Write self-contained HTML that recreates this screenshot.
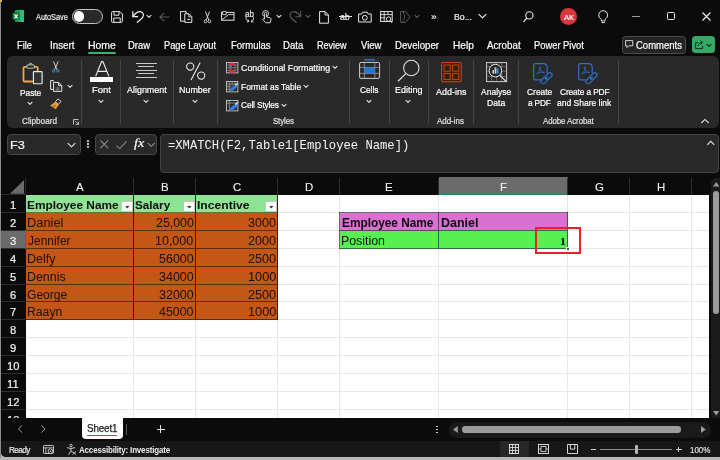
<!DOCTYPE html>
<html><head><meta charset="utf-8"><title>Excel</title>
<style>
html,body{margin:0;padding:0;}
body{width:720px;height:460px;overflow:hidden;background:#0b0b0b;font-family:"Liberation Sans",sans-serif;}
#w{position:relative;width:720px;height:460px;overflow:hidden;will-change:transform;}
.r{position:absolute;box-sizing:border-box;}
.t{position:absolute;white-space:pre;transform-origin:0 0;}
svg{overflow:visible;}
</style></head><body><div id="w">
<div class="r" style="left:0.00px;top:0.00px;width:720.00px;height:460.00px;background:#b6b6b6;"></div>
<div class="r" style="left:0.00px;top:0.00px;width:1.20px;height:458.00px;background:#8c8c8c;"></div>
<div class="r" style="left:1.20px;top:0.00px;width:718.80px;height:457.30px;background:#0b0b0b;border-bottom-left-radius:5px;"></div>
<div class="r" style="left:0.00px;top:0.00px;width:1.60px;height:1.60px;background:#d9b83a;"></div>
<svg class="r" style="left:12.00px;top:10.00px;" width="13" height="12" viewBox="0 0 13 12" fill="none"><rect x="3" y="0" width="9" height="12" rx="0.8" fill="#1d9a57"/>
<rect x="7.6" y="0" width="4.4" height="12" rx="0.6" fill="#2dbd76"/>
<rect x="0.5" y="2.8" width="7.3" height="7" rx="0.6" fill="#0f7a40"/>
<path d="M2.5 4.4L5.7 8.3 M5.7 4.4L2.5 8.3" stroke="#fff" stroke-width="1.15"/></svg>
<span class="t" style="left:35.60px;top:12px;font-size:8.40px;line-height:11px;color:#ececec;transform:scaleX(0.8778);-webkit-text-stroke:0.2px #ececec;">AutoSave</span>
<div class="r" style="left:71.70px;top:9.00px;width:31.60px;height:15.00px;background:#2a2a2a;border:1.2px solid #c4c4c4;border-radius:8px;"></div>
<div class="r" style="left:73.60px;top:11.00px;width:10.80px;height:10.80px;background:#ffffff;border-radius:5.5px;"></div>
<svg class="r" style="left:111.00px;top:11.00px;" width="12" height="12" viewBox="0 0 12 12" fill="none"><path d="M0.6 1.6a1 1 0 0 1 1-1H9l2.4 2.4v7.4a1 1 0 0 1-1 1H1.6a1 1 0 0 1-1-1z M3 0.8v3.4h5V0.8 M2.8 11.2V7h6.4v4.2" stroke="#e8e8e8" stroke-width="1"/></svg>
<svg class="r" style="left:131.50px;top:10.50px;" width="12" height="12" viewBox="0 0 12 12" fill="none"><path d="M0.8 0.3V5.7H6.1 M1.1 5.5C3 2.5 6 0.5 8.5 0.7C11 1 12 3.5 11.1 5.5C10.3 7.5 7.5 9.5 4.8 11.5" stroke="#f0f0f0" stroke-width="1.2"/></svg>
<svg class="r" style="left:147.00px;top:14.60px;" width="4" height="3" viewBox="0 0 4 3" fill="none"><path d="M0 0.3L2 2.3L4 0.3" stroke="#e0e0e0" stroke-width="1.1" stroke-linecap="round" stroke-linejoin="round"/></svg>
<svg class="r" style="left:159.00px;top:11.50px;" width="11" height="10" viewBox="0 0 11 10" fill="none"><path d="M10.5 5H1 M5 0.8L0.9 5L5 9.2" stroke="#5a5a5a" stroke-width="1.1"/></svg>
<svg class="r" style="left:180.00px;top:10.50px;" width="13" height="13" viewBox="0 0 13 13" fill="none"><path d="M6.2 2.6V0.6H0.6v9.6h4" stroke="#e8e8e8" stroke-width="1"/><path d="M4.8 2.8h4.2l2.8 2.8v5.8H4.8z" stroke="#e8e8e8" stroke-width="1" fill="#0b0b0b"/><path d="M8.8 3v2.8h2.8" stroke="#e8e8e8" stroke-width="0.9"/><path d="M7.4 8.4h2.4" stroke="#e8e8e8" stroke-width="1.2"/></svg>
<svg class="r" style="left:202.50px;top:10.50px;" width="9" height="13" viewBox="0 0 9 13" fill="none"><path d="M2.4 0.5L5.8 9 M6.6 0.5L3.2 9" stroke="#e8e8e8" stroke-width="0.9"/><circle cx="2.5" cy="10.4" r="1.4" stroke="#e8e8e8" stroke-width="0.85"/><circle cx="6.5" cy="10.4" r="1.4" stroke="#e8e8e8" stroke-width="0.85"/></svg>
<svg class="r" style="left:221.00px;top:10.50px;" width="14" height="11" viewBox="0 0 14 11" fill="none"><rect x="0.6" y="1.4" width="12.4" height="7.8" stroke="#e8e8e8" stroke-width="1"/><path d="M1.2 8.6L7.6 3.6h5" stroke="#e8e8e8" stroke-width="0.9"/><path d="M1.6 0.6h3.6v3H1.6z" stroke="#e8e8e8" stroke-width="0.8" fill="#0b0b0b"/></svg>
<span class="t" style="left:244.70px;top:9px;font-size:8.40px;line-height:11px;color:#e8e8e8;transform:scaleX(0.9669);-webkit-text-stroke:0.2px #e8e8e8;">ab</span>
<svg class="r" style="left:244.60px;top:16.20px;" width="10" height="6.4" viewBox="0 0 10 6.4" fill="none"><path d="M1.4 0.8c-1 2 0 3.8 2.4 4.6 M8 0.8c1.2 1.8 0.6 3.8-1.6 4.8 M2.8 3.4l1.2 2-2.2 0.6 M7.2 3.6l-1 2.2 2.2 0.2" stroke="#e8e8e8" stroke-width="0.85"/></svg>
<svg class="r" style="left:260.60px;top:9.60px;" width="11" height="14" viewBox="0 0 11 14" fill="none"><circle cx="4.6" cy="3.6" r="3" stroke="#e8e8e8" stroke-width="0.9"/><path d="M3.6 9V3.4a1 1 0 0 1 2 0V7l3.4 0.8c0.8 0.2 1.2 0.8 1 1.6l-0.8 3.4H4.6L2 9.6c-0.4-0.8 0.6-1.6 1.6-0.6z" stroke="#e8e8e8" stroke-width="0.9" fill="#0b0b0b"/></svg>
<svg class="r" style="left:277.00px;top:14.60px;" width="4" height="3" viewBox="0 0 4 3" fill="none"><path d="M0 0.3L2 2.3L4 0.3" stroke="#e0e0e0" stroke-width="1.1" stroke-linecap="round" stroke-linejoin="round"/></svg>
<svg class="r" style="left:290.40px;top:10.50px;" width="11" height="12" viewBox="0 0 11 12" fill="none"><path d="M10.6 0.3V5.7H5.3 M10.3 5.5C8.4 2.5 5.4 0.5 2.9 0.7C0.4 1 -0.6 3.5 0.3 5.5C1.1 7.5 3.9 9.5 6.6 11.5" stroke="#5a5a5a" stroke-width="1.15"/></svg>
<svg class="r" style="left:305.50px;top:14.60px;" width="4" height="3" viewBox="0 0 4 3" fill="none"><path d="M0 0.3L2 2.3L4 0.3" stroke="#5a5a5a" stroke-width="1.1" stroke-linecap="round" stroke-linejoin="round"/></svg>
<svg class="r" style="left:319.00px;top:10.50px;" width="10" height="13" viewBox="0 0 10 13" fill="none"><path d="M0.6 0.6h5.6l3.2 3.2v8.4H0.6z M6 0.8v3.2h3.2" stroke="#e8e8e8" stroke-width="1"/></svg>
<span class="t" style="left:340.14px;top:11px;font-size:9.00px;line-height:12px;color:#e8e8e8;transform:scaleX(0.9730);-webkit-text-stroke:0.2px #e8e8e8;">ab</span>
<div class="r" style="left:338.50px;top:16.30px;width:13.00px;height:1.00px;background:#e8e8e8;"></div>
<svg class="r" style="left:357.50px;top:10.50px;" width="14" height="12" viewBox="0 0 14 12" fill="none"><path d="M0.6 3h3l1-1.8h4.6l1 1.8h3v8H0.6z" stroke="#e8e8e8" stroke-width="1"/><circle cx="6.8" cy="6.8" r="2.4" stroke="#e8e8e8" stroke-width="1"/></svg>
<svg class="r" style="left:380.00px;top:10.60px;" width="13" height="13" viewBox="0 0 13 13" fill="none"><rect x="0.6" y="0.6" width="11.6" height="9.8" stroke="#e8e8e8" stroke-width="1"/><path d="M0.6 3.6h11.6 M0.6 6.8h5 M4.2 0.6v9.8 M8 0.6v3" stroke="#e8e8e8" stroke-width="0.9"/><circle cx="8.6" cy="8" r="2.2" stroke="#e8e8e8" stroke-width="0.9" fill="#0b0b0b"/><path d="M10.2 9.8l2 2.2" stroke="#e8e8e8" stroke-width="0.9"/></svg>
<svg class="r" style="left:400.00px;top:10.50px;" width="11" height="12" viewBox="0 0 11 12" fill="none"><path d="M0.6 0.6h5l4.4 5.2-4.4 5.6h-5z M3 0.8c2 3 2 7 0 10" stroke="#5a5a5a" stroke-width="1"/></svg>
<svg class="r" style="left:415.00px;top:14.60px;" width="4" height="3" viewBox="0 0 4 3" fill="none"><path d="M0 0.3L2 2.3L4 0.3" stroke="#5a5a5a" stroke-width="1.1" stroke-linecap="round" stroke-linejoin="round"/></svg>
<span class="t" style="left:430.58px;top:11px;font-size:9.00px;line-height:12px;color:#e8e8e8;transform:scaleX(1.1200);-webkit-text-stroke:0.2px #e8e8e8;">»</span>
<span class="t" style="left:454.30px;top:11px;font-size:8.60px;line-height:12px;color:#ececec;transform:scaleX(1.0154);-webkit-text-stroke:0.2px #ececec;">Bo...</span>
<svg class="r" style="left:478.50px;top:14.20px;" width="7" height="4.5" viewBox="0 0 7 4.5" fill="none"><path d="M0 0.3L3.5 3.8L7 0.3" stroke="#e8e8e8" stroke-width="1.2" stroke-linecap="round" stroke-linejoin="round"/></svg>
<svg class="r" style="left:522.50px;top:10.50px;" width="11" height="12" viewBox="0 0 11 12" fill="none"><circle cx="6.4" cy="4.4" r="3.6" stroke="#e8e8e8" stroke-width="1.1"/><path d="M3.8 7L0.6 10.8" stroke="#e8e8e8" stroke-width="1.2"/></svg>
<div class="r" style="left:560.00px;top:8.00px;width:17.00px;height:17.00px;background:#d9363e;border-radius:9px;"></div>
<span class="t" style="left:563.60px;top:13px;font-size:7.20px;line-height:10px;color:#fff;transform:scaleX(1.0526);-webkit-text-stroke:0.2px #fff;">AK</span>
<svg class="r" style="left:597.50px;top:10.00px;" width="11" height="14" viewBox="0 0 11 14" fill="none"><path d="M3.4 9.4C1.4 8 0.6 6.4 0.8 4.8 1 2.4 3 0.7 5.2 0.7s4.2 1.7 4.4 4.1c0.2 1.6-0.6 3.2-2.6 4.6v1.6H3.4z M3.6 12.6h3.2" stroke="#e8e8e8" stroke-width="1"/></svg>
<div class="r" style="left:632.00px;top:15.80px;width:8.00px;height:1.00px;background:#9c9c9c;"></div>
<div class="r" style="left:667.30px;top:12.30px;width:8.00px;height:8.00px;background:transparent;border:1.2px solid #e8e8e8;border-radius:1.5px;"></div>
<svg class="r" style="left:702.00px;top:12.00px;" width="9" height="9" viewBox="0 0 9 9" fill="none"><path d="M0.5 0.5l8 8 M8.5 0.5l-8 8" stroke="#f0f0f0" stroke-width="1.1"/></svg>
<span class="t" style="left:16.67px;top:39px;font-size:10.30px;line-height:14px;color:#ffffff;transform:scaleX(0.8976);-webkit-text-stroke:0.2px #ffffff;">File</span>
<span class="t" style="left:49.71px;top:39px;font-size:10.30px;line-height:14px;color:#ffffff;transform:scaleX(0.9511);-webkit-text-stroke:0.2px #ffffff;">Insert</span>
<span class="t" style="left:87.78px;top:39px;font-size:10.30px;line-height:14px;color:#ffffff;transform:scaleX(1.0133);-webkit-text-stroke:0.2px #ffffff;">Home</span>
<span class="t" style="left:128.05px;top:39px;font-size:10.30px;line-height:14px;color:#ffffff;transform:scaleX(0.9180);-webkit-text-stroke:0.2px #ffffff;">Draw</span>
<span class="t" style="left:164.07px;top:39px;font-size:10.30px;line-height:14px;color:#ffffff;transform:scaleX(0.9008);-webkit-text-stroke:0.2px #ffffff;">Page Layout</span>
<span class="t" style="left:230.85px;top:39px;font-size:10.30px;line-height:14px;color:#ffffff;transform:scaleX(0.9232);-webkit-text-stroke:0.2px #ffffff;">Formulas</span>
<span class="t" style="left:283.24px;top:39px;font-size:10.30px;line-height:14px;color:#ffffff;transform:scaleX(0.9333);-webkit-text-stroke:0.2px #ffffff;">Data</span>
<span class="t" style="left:316.89px;top:39px;font-size:10.30px;line-height:14px;color:#ffffff;transform:scaleX(0.8771);-webkit-text-stroke:0.2px #ffffff;">Review</span>
<span class="t" style="left:360.54px;top:39px;font-size:10.30px;line-height:14px;color:#ffffff;transform:scaleX(0.9220);-webkit-text-stroke:0.2px #ffffff;">View</span>
<span class="t" style="left:394.84px;top:39px;font-size:10.30px;line-height:14px;color:#ffffff;transform:scaleX(0.9391);-webkit-text-stroke:0.2px #ffffff;">Developer</span>
<span class="t" style="left:452.80px;top:39px;font-size:10.30px;line-height:14px;color:#ffffff;transform:scaleX(0.9800);-webkit-text-stroke:0.2px #ffffff;">Help</span>
<span class="t" style="left:487.00px;top:39px;font-size:10.30px;line-height:14px;color:#ffffff;transform:scaleX(0.9465);-webkit-text-stroke:0.2px #ffffff;">Acrobat</span>
<span class="t" style="left:534.26px;top:39px;font-size:10.30px;line-height:14px;color:#ffffff;transform:scaleX(0.9080);-webkit-text-stroke:0.2px #ffffff;">Power Pivot</span>
<div class="r" style="left:88.00px;top:52.00px;width:27.50px;height:1.60px;background:#36b36f;border-radius:1px;"></div>
<div class="r" style="left:621.50px;top:35.80px;width:64.50px;height:17.90px;background:#242424;border:1px solid #4c4c4c;border-radius:3.5px;"></div>
<svg class="r" style="left:625.00px;top:40.20px;" width="8.4" height="8.4" viewBox="0 0 8.4 8.4" fill="none"><path d="M0.6 0.6h7.2v5.2H3.8L2 7.6V5.8H0.6z" stroke="#e8e8e8" stroke-width="0.9"/></svg>
<span class="t" style="left:636.34px;top:39px;font-size:10.30px;line-height:14px;color:#ffffff;transform:scaleX(0.9224);-webkit-text-stroke:0.2px #ffffff;">Comments</span>
<div class="r" style="left:692.00px;top:35.80px;width:22.80px;height:17.60px;background:#36a866;border-radius:3.5px;"></div>
<svg class="r" style="left:695.00px;top:40.00px;" width="9" height="9" viewBox="0 0 9 9" fill="none"><path d="M3 2.6H0.6v6h7V6 M3.2 6C3.4 3.6 5 2.6 7 2.6 M5.4 0.6L7.6 2.6 5.4 4.6" stroke="#0e2a1a" stroke-width="0.95"/></svg>
<svg class="r" style="left:707.20px;top:43.80px;" width="4" height="3" viewBox="0 0 4 3" fill="none"><path d="M0 0.3L2 2.3L4 0.3" stroke="#0e2a1a" stroke-width="1.1" stroke-linecap="round" stroke-linejoin="round"/></svg>
<div class="r" style="left:7.00px;top:56.00px;width:711.50px;height:71.50px;background:#292929;border-radius:6px;"></div>
<div class="r" style="left:80.50px;top:59.50px;width:1.00px;height:64.50px;background:#454545;"></div>
<div class="r" style="left:120.00px;top:59.50px;width:1.00px;height:64.50px;background:#454545;"></div>
<div class="r" style="left:173.00px;top:59.50px;width:1.00px;height:64.50px;background:#454545;"></div>
<div class="r" style="left:217.00px;top:59.50px;width:1.00px;height:64.50px;background:#454545;"></div>
<div class="r" style="left:349.00px;top:59.50px;width:1.00px;height:64.50px;background:#454545;"></div>
<div class="r" style="left:389.00px;top:59.50px;width:1.00px;height:64.50px;background:#454545;"></div>
<div class="r" style="left:428.00px;top:59.50px;width:1.00px;height:64.50px;background:#454545;"></div>
<div class="r" style="left:473.00px;top:59.50px;width:1.00px;height:64.50px;background:#454545;"></div>
<div class="r" style="left:518.00px;top:59.50px;width:1.00px;height:64.50px;background:#454545;"></div>
<div class="r" style="left:618.00px;top:59.50px;width:1.00px;height:64.50px;background:#454545;"></div>
<svg class="r" style="left:21.50px;top:61.50px;" width="21" height="23" viewBox="0 0 21 23" fill="none"><path d="M5.5 4.9H2.5a1 1 0 0 0-1 1V18.5a1 1 0 0 0 1 1H10.8 M11.7 4.9H14.7a1 1 0 0 1 1 1V9" stroke="#eea83a" stroke-width="1.8"/>
<rect x="4.9" y="2.9" width="7.4" height="3.3" rx="0.7" stroke="#cfcfcf" stroke-width="0.9" fill="#292929"/>
<path d="M7 2.9a1.6 1.7 0 0 1 3.2 0" stroke="#cfcfcf" stroke-width="0.9"/>
<rect x="11.4" y="9.6" width="8.7" height="12.1" rx="0.6" stroke="#ececec" stroke-width="1.15" fill="#323232"/></svg>
<span class="t" style="left:19.65px;top:86px;font-size:9.60px;line-height:13px;color:#ffffff;transform:scaleX(0.8700);letter-spacing:-0.026px;-webkit-text-stroke:0.2px #ffffff;">Paste</span>
<svg class="r" style="left:28.00px;top:101.50px;" width="4" height="3" viewBox="0 0 4 3" fill="none"><path d="M0 0.3L2 2.3L4 0.3" stroke="#e0e0e0" stroke-width="1.1" stroke-linecap="round" stroke-linejoin="round"/></svg>
<svg class="r" style="left:51.80px;top:61.40px;" width="8" height="12.5" viewBox="0 0 8 12.5" fill="none"><path d="M1.4 0.4L5 8.6 M6.2 0.4L2.6 8.6" stroke="#e8e8e8" stroke-width="0.85"/><circle cx="1.7" cy="9.9" r="1.2" stroke="#3a9ae8" stroke-width="0.9"/><circle cx="5.9" cy="9.9" r="1.2" stroke="#3a9ae8" stroke-width="0.9"/></svg>
<svg class="r" style="left:50.00px;top:80.00px;" width="12.5" height="12" viewBox="0 0 12.5 12" fill="none"><path d="M3.4 1.6V0.6H0.6v8.8h2.4" stroke="#e8e8e8" stroke-width="1"/><path d="M3.6 2.4h5l3.2 3v6H3.6z M8.4 2.6v3h3.2" stroke="#e8e8e8" stroke-width="1"/><path d="M5.6 8h4 M5.6 9.8h4" stroke="#bdbdbd" stroke-width="0.7"/></svg>
<svg class="r" style="left:67.60px;top:85.00px;" width="4" height="3" viewBox="0 0 4 3" fill="none"><path d="M0 0.3L2 2.3L4 0.3" stroke="#e0e0e0" stroke-width="1.1" stroke-linecap="round" stroke-linejoin="round"/></svg>
<svg class="r" style="left:50.00px;top:98.40px;" width="12" height="11.5" viewBox="0 0 12 11.5" fill="none"><path d="M8 0.8l3 2.6-2.6 3-3-2.6z" stroke="#e8e8e8" stroke-width="0.9"/><path d="M5.6 4L0.6 7.6l5 3.4 3-4.4z" fill="#e8a23a" stroke="#e8a23a" stroke-width="0.6"/><path d="M2.6 8.4l2 1.4 M4 7l2.2 1.6" stroke="#292929" stroke-width="0.6"/></svg>
<span class="t" style="left:22.20px;top:115px;font-size:9.00px;line-height:12px;color:#e2e2e2;transform:scaleX(0.9067);-webkit-text-stroke:0.2px #e2e2e2;">Clipboard</span>
<svg class="r" style="left:73.00px;top:118.60px;" width="6.5" height="6" viewBox="0 0 6.5 6" fill="none"><path d="M0.5 5.5V0.5h5" stroke="#d0d0d0" stroke-width="0.9"/><path d="M2.4 2.2l3 3 M5.6 2.6v2.8H2.8" stroke="#d0d0d0" stroke-width="0.9"/></svg>
<svg class="r" style="left:94.50px;top:60.60px;" width="14.5" height="15.6" viewBox="0 0 14.5 15.6" fill="none"><path d="M0.6 15.4L6.6 0.6h1.3L13.9 15.4 M2.6 10.4h9.4" stroke="#ececec" stroke-width="1.15"/></svg>
<div class="r" style="left:89.60px;top:76.80px;width:23.40px;height:5.40px;background:#ffffff;"></div>
<span class="t" style="left:91.66px;top:83px;font-size:9.60px;line-height:13px;color:#ffffff;transform:scaleX(0.9871);-webkit-text-stroke:0.2px #ffffff;">Font</span>
<svg class="r" style="left:98.80px;top:99.60px;" width="4" height="3" viewBox="0 0 4 3" fill="none"><path d="M0 0.3L2 2.3L4 0.3" stroke="#e0e0e0" stroke-width="1.1" stroke-linecap="round" stroke-linejoin="round"/></svg>
<div class="r" style="left:136.00px;top:62.55px;width:21.00px;height:0.90px;background:#c8c8c8;"></div>
<div class="r" style="left:138.20px;top:66.35px;width:16.00px;height:0.90px;background:#c8c8c8;"></div>
<div class="r" style="left:136.00px;top:69.85px;width:21.00px;height:0.90px;background:#c8c8c8;"></div>
<div class="r" style="left:138.20px;top:73.35px;width:16.00px;height:0.90px;background:#c8c8c8;"></div>
<div class="r" style="left:136.00px;top:76.85px;width:21.00px;height:0.90px;background:#c8c8c8;"></div>
<span class="t" style="left:127.00px;top:83px;font-size:9.60px;line-height:13px;color:#ffffff;transform:scaleX(0.9310);-webkit-text-stroke:0.2px #ffffff;">Alignment</span>
<svg class="r" style="left:144.30px;top:99.60px;" width="4" height="3" viewBox="0 0 4 3" fill="none"><path d="M0 0.3L2 2.3L4 0.3" stroke="#e0e0e0" stroke-width="1.1" stroke-linecap="round" stroke-linejoin="round"/></svg>
<svg class="r" style="left:185.50px;top:61.50px;" width="19.5" height="18.5" viewBox="0 0 19.5 18.5" fill="none"><circle cx="4.2" cy="4.6" r="3.6" stroke="#ececec" stroke-width="1.1"/><circle cx="15.2" cy="13.6" r="3.6" stroke="#ececec" stroke-width="1.1"/><path d="M14.2 0.6L5 18" stroke="#ececec" stroke-width="1.1"/></svg>
<span class="t" style="left:178.90px;top:83px;font-size:9.60px;line-height:13px;color:#ffffff;transform:scaleX(0.9306);-webkit-text-stroke:0.2px #ffffff;">Number</span>
<svg class="r" style="left:192.80px;top:99.60px;" width="4" height="3" viewBox="0 0 4 3" fill="none"><path d="M0 0.3L2 2.3L4 0.3" stroke="#e0e0e0" stroke-width="1.1" stroke-linecap="round" stroke-linejoin="round"/></svg>
<svg class="r" style="left:226.00px;top:61.50px;" width="12.5" height="11.5" viewBox="0 0 12.5 11.5" fill="none"><rect x="0.5" y="0.5" width="11.4" height="10.4" stroke="#d8d8d8" stroke-width="0.8"/><path d="M0.5 3.1h11.4 M0.5 5.7h11.4 M0.5 8.3h11.4 M3.3 0.5v10.4 M9 0.5v10.4" stroke="#9a9a9a" stroke-width="0.6"/><rect x="3.4" y="0.9" width="5.5" height="2.2" fill="#e8262c"/><rect x="3.4" y="3.2" width="2.4" height="2.6" fill="#3a7bd5"/><rect x="3.4" y="8.3" width="5.5" height="2.3" fill="#e8262c"/><rect x="3.4" y="5.8" width="5.5" height="2.5" fill="#e8262c" opacity="0.0"/><rect x="3.4" y="5.9" width="2.4" height="2.4" fill="#e8262c"/></svg>
<span class="t" style="left:240.54px;top:61px;font-size:9.60px;line-height:13px;color:#ffffff;transform:scaleX(0.9232);-webkit-text-stroke:0.2px #ffffff;">Conditional Formatting</span>
<svg class="r" style="left:332.80px;top:66.30px;" width="4" height="3" viewBox="0 0 4 3" fill="none"><path d="M0 0.3L2 2.3L4 0.3" stroke="#e0e0e0" stroke-width="1.1" stroke-linecap="round" stroke-linejoin="round"/></svg>
<svg class="r" style="left:226.00px;top:80.50px;" width="12.5" height="11.5" viewBox="0 0 12.5 11.5" fill="none"><rect x="0.5" y="0.5" width="11.4" height="10.4" stroke="#d8d8d8" stroke-width="0.8"/><path d="M0.5 3.1h11.4 M0.5 5.7h5 M0.5 8.3h4 M3.3 0.5v10.4 M6.2 0.5v4 M9 0.5v3" stroke="#bdbdbd" stroke-width="0.6"/><path d="M3.6 10.6l1-3.2 5.6-4.6 2 2.2-5.4 4.8z" fill="#2f7fe0"/><path d="M8.6 3.6l3 -2.2 0.8 1-2.4 2.6z" fill="#cfcfcf"/></svg>
<span class="t" style="left:241.04px;top:80px;font-size:9.60px;line-height:13px;color:#ffffff;transform:scaleX(0.8761);-webkit-text-stroke:0.2px #ffffff;">Format as Table</span>
<svg class="r" style="left:303.70px;top:84.90px;" width="4" height="3" viewBox="0 0 4 3" fill="none"><path d="M0 0.3L2 2.3L4 0.3" stroke="#e0e0e0" stroke-width="1.1" stroke-linecap="round" stroke-linejoin="round"/></svg>
<svg class="r" style="left:226.00px;top:99.50px;" width="12.5" height="11.5" viewBox="0 0 12.5 11.5" fill="none"><rect x="0.5" y="0.5" width="11.4" height="10.4" stroke="#d8d8d8" stroke-width="0.8"/><path d="M0.5 3.1h11.4 M3.3 0.5v10.4" stroke="#bdbdbd" stroke-width="0.6"/><path d="M3.6 10.6l1-3.4 5.4-3.6h1.6v3l-5.2 4z" fill="#2f7fe0"/><path d="M8.8 3.8l3-2.4 0.8 1-2.4 2.8z" fill="#cfcfcf"/></svg>
<span class="t" style="left:240.56px;top:98px;font-size:9.60px;line-height:13px;color:#ffffff;transform:scaleX(0.8700);letter-spacing:-0.164px;-webkit-text-stroke:0.2px #ffffff;">Cell Styles</span>
<svg class="r" style="left:281.50px;top:104.00px;" width="4" height="3" viewBox="0 0 4 3" fill="none"><path d="M0 0.3L2 2.3L4 0.3" stroke="#e0e0e0" stroke-width="1.1" stroke-linecap="round" stroke-linejoin="round"/></svg>
<span class="t" style="left:272.67px;top:115px;font-size:9.00px;line-height:12px;color:#e2e2e2;transform:scaleX(0.8700);letter-spacing:-0.119px;-webkit-text-stroke:0.2px #e2e2e2;">Styles</span>
<svg class="r" style="left:359.00px;top:59.00px;" width="21.5" height="20" viewBox="0 0 21.5 20" fill="none"><path d="M5 0.8h11" stroke="#2f7fe0" stroke-width="1.3"/><rect x="0.6" y="3.4" width="20" height="16" rx="1.4" stroke="#cfcfcf" stroke-width="1"/><path d="M0.6 8.4h20 M0.6 14.4h20 M5.4 3.4v16 M15.8 3.4v16" stroke="#9a9a9a" stroke-width="0.8"/><rect x="5.6" y="8.7" width="10" height="5.4" fill="#1e78d7"/></svg>
<span class="t" style="left:360.06px;top:83px;font-size:9.60px;line-height:13px;color:#ffffff;transform:scaleX(0.8700);letter-spacing:-0.054px;-webkit-text-stroke:0.2px #ffffff;">Cells</span>
<svg class="r" style="left:367.00px;top:99.60px;" width="4" height="3" viewBox="0 0 4 3" fill="none"><path d="M0 0.3L2 2.3L4 0.3" stroke="#e0e0e0" stroke-width="1.1" stroke-linecap="round" stroke-linejoin="round"/></svg>
<svg class="r" style="left:397.00px;top:59.00px;" width="23" height="23" viewBox="0 0 23 23" fill="none"><circle cx="14.3" cy="9" r="7.7" stroke="#e4e4e4" stroke-width="1.05"/><path d="M8.8 14.6L1 22.2" stroke="#e4e4e4" stroke-width="1.2"/></svg>
<span class="t" style="left:394.60px;top:83px;font-size:9.60px;line-height:13px;color:#ffffff;transform:scaleX(0.9372);-webkit-text-stroke:0.2px #ffffff;">Editing</span>
<svg class="r" style="left:406.20px;top:99.60px;" width="4" height="3" viewBox="0 0 4 3" fill="none"><path d="M0 0.3L2 2.3L4 0.3" stroke="#e0e0e0" stroke-width="1.1" stroke-linecap="round" stroke-linejoin="round"/></svg>
<svg class="r" style="left:441.00px;top:61.80px;" width="21" height="20.4" viewBox="0 0 21 20.4" fill="none"><rect x="0.6" y="0.6" width="19.6" height="19.2" rx="0.6" stroke="#d04a18" stroke-width="1" fill="#3d1c11"/><rect x="3" y="3" width="6.2" height="6.2" stroke="#d04a18" stroke-width="0.9" fill="#2b211e"/><rect x="11.6" y="3" width="6.2" height="6.2" stroke="#d04a18" stroke-width="0.9" fill="#2b211e"/><rect x="3" y="11.4" width="6.2" height="6.2" stroke="#d04a18" stroke-width="0.9" fill="#2b211e"/><rect x="11.6" y="11.4" width="6.2" height="6.2" stroke="#d04a18" stroke-width="0.9" fill="#2b211e"/></svg>
<span class="t" style="left:436.00px;top:85px;font-size:9.60px;line-height:13px;color:#ffffff;transform:scaleX(0.9346);-webkit-text-stroke:0.2px #ffffff;">Add-ins</span>
<span class="t" style="left:437.40px;top:115px;font-size:9.00px;line-height:12px;color:#e2e2e2;transform:scaleX(0.8812);-webkit-text-stroke:0.2px #e2e2e2;">Add-ins</span>
<svg class="r" style="left:485.50px;top:62.00px;" width="21.5" height="20.5" viewBox="0 0 21.5 20.5" fill="none"><rect x="0.6" y="0.6" width="20" height="19" stroke="#cfcfcf" stroke-width="1"/><path d="M0.6 4.6h20 M0.6 9.4h20 M0.6 14.4h20 M5.6 0.6v19 M10.6 0.6v19 M15.6 0.6v19" stroke="#8c8c8c" stroke-width="0.6"/><circle cx="9.4" cy="8.6" r="6.3" fill="#292929" stroke="#e4e4e4" stroke-width="1"/><path d="M14 13.4l6 6" stroke="#e4e4e4" stroke-width="1.3"/><rect x="6.4" y="8" width="1.6" height="3.6" fill="#d0d0d0"/><rect x="8.6" y="5.4" width="1.8" height="6.2" fill="#d0d0d0"/><rect x="10.8" y="6.4" width="1.8" height="5.2" fill="#2f8fe8"/></svg>
<span class="t" style="left:481.00px;top:85px;font-size:9.60px;line-height:13px;color:#ffffff;transform:scaleX(0.8872);-webkit-text-stroke:0.2px #ffffff;">Analyse</span>
<span class="t" style="left:486.82px;top:96px;font-size:9.60px;line-height:13px;color:#ffffff;transform:scaleX(0.9019);-webkit-text-stroke:0.2px #ffffff;">Data</span>
<svg class="r" style="left:532.60px;top:63.00px;" width="19" height="21" viewBox="0 0 19 21" fill="none"><path d="M2 0.7h8.6a3.6 3.6 0 0 1 3.6 3.6V10 M8 16.8H2a1.3 1.3 0 0 1-1.3-1.3V2A1.3 1.3 0 0 1 2 0.7" stroke="#2f6fd0" stroke-width="1.2"/>
<path d="M3.8 10.8c2-1.4 3.4-4.2 3.6-6.4 0.1-1-1-1-1 0 0 2 2.2 4.6 4.6 5.4 0.8 0.2 0.8-0.8 0-0.8-2.4 0-5.2 0.8-7.2 1.8z" stroke="#2f6fd0" stroke-width="0.8"/>
<rect x="7.5" y="15.2" width="7.6" height="4.4" rx="2.2" transform="rotate(-45 11.3 17.4)" stroke="#2f6fd0" stroke-width="1.2" fill="#292929"/>
<rect x="11.9" y="10.8" width="7.6" height="4.4" rx="2.2" transform="rotate(-45 15.7 13)" stroke="#2f6fd0" stroke-width="1.2" fill="#292929"/>
<path d="M12.2 16.5l2.6-2.6" stroke="#2f6fd0" stroke-width="1.2"/></svg>
<svg class="r" style="left:577.80px;top:63.00px;" width="19" height="21" viewBox="0 0 19 21" fill="none"><path d="M2 0.7h8.6a3.6 3.6 0 0 1 3.6 3.6V10 M8 16.8H2a1.3 1.3 0 0 1-1.3-1.3V2A1.3 1.3 0 0 1 2 0.7" stroke="#2f6fd0" stroke-width="1.2"/>
<path d="M3.8 10.8c2-1.4 3.4-4.2 3.6-6.4 0.1-1-1-1-1 0 0 2 2.2 4.6 4.6 5.4 0.8 0.2 0.8-0.8 0-0.8-2.4 0-5.2 0.8-7.2 1.8z" stroke="#2f6fd0" stroke-width="0.8"/>
<rect x="7.5" y="15.2" width="7.6" height="4.4" rx="2.2" transform="rotate(-45 11.3 17.4)" stroke="#2f6fd0" stroke-width="1.2" fill="#292929"/>
<rect x="11.9" y="10.8" width="7.6" height="4.4" rx="2.2" transform="rotate(-45 15.7 13)" stroke="#2f6fd0" stroke-width="1.2" fill="#292929"/>
<path d="M12.2 16.5l2.6-2.6" stroke="#2f6fd0" stroke-width="1.2"/></svg>
<span class="t" style="left:526.96px;top:85px;font-size:9.60px;line-height:13px;color:#ffffff;transform:scaleX(0.8786);-webkit-text-stroke:0.2px #ffffff;">Create</span>
<span class="t" style="left:527.97px;top:96px;font-size:9.60px;line-height:13px;color:#ffffff;transform:scaleX(0.8700);letter-spacing:-0.246px;-webkit-text-stroke:0.2px #ffffff;">a PDF</span>
<span class="t" style="left:559.57px;top:85px;font-size:9.60px;line-height:13px;color:#ffffff;transform:scaleX(0.8700);letter-spacing:-0.147px;-webkit-text-stroke:0.2px #ffffff;">Create a PDF</span>
<span class="t" style="left:556.97px;top:96px;font-size:9.60px;line-height:13px;color:#ffffff;transform:scaleX(0.8851);-webkit-text-stroke:0.2px #ffffff;">and Share link</span>
<span class="t" style="left:543.00px;top:115px;font-size:9.00px;line-height:12px;color:#e2e2e2;transform:scaleX(0.8700);letter-spacing:-0.060px;-webkit-text-stroke:0.2px #e2e2e2;">Adobe Acrobat</span>
<svg class="r" style="left:701.40px;top:118.80px;" width="8" height="4.2" viewBox="0 0 8 4.2" fill="none"><path d="M0.3 4L4 0.4L7.7 4" stroke="#e0e0e0" stroke-width="1.1"/></svg>
<div class="r" style="left:7.00px;top:134.00px;width:73.50px;height:20.50px;background:#292929;border:1px solid #464646;border-radius:4px;"></div>
<span class="t" style="left:9.77px;top:137px;font-size:11.60px;line-height:16px;color:#f4f4f4;transform:scaleX(1.0995);-webkit-text-stroke:0.2px #f4f4f4;">F3</span>
<svg class="r" style="left:68.00px;top:143.00px;" width="7" height="4.5" viewBox="0 0 7 4.5" fill="none"><path d="M0 0.3L3.5 3.8L7 0.3" stroke="#e0e0e0" stroke-width="1.1" stroke-linecap="round" stroke-linejoin="round"/></svg>
<div class="r" style="left:86.90px;top:140.40px;width:1.80px;height:1.80px;background:#f0f0f0;border-radius:0.9px;"></div>
<div class="r" style="left:86.90px;top:143.30px;width:1.80px;height:1.80px;background:#f0f0f0;border-radius:0.9px;"></div>
<div class="r" style="left:86.90px;top:146.30px;width:1.80px;height:1.80px;background:#f0f0f0;border-radius:0.9px;"></div>
<div class="r" style="left:95.00px;top:134.00px;width:62.00px;height:20.50px;background:#292929;border:1px solid #464646;border-radius:4px;"></div>
<svg class="r" style="left:100.00px;top:140.00px;" width="8.5" height="8.5" viewBox="0 0 8.5 8.5" fill="none"><path d="M0.4 0.4l7.7 7.7 M8.1 0.4L0.4 8.1" stroke="#8a8a8a" stroke-width="1.1"/></svg>
<svg class="r" style="left:116.00px;top:140.50px;" width="11" height="8" viewBox="0 0 11 8" fill="none"><path d="M0.4 4.6L3.6 7.6L10.6 0.4" stroke="#8a8a8a" stroke-width="1.1"/></svg>
<span class="t" style="left:134.27px;top:134px;font-size:13.50px;line-height:18px;color:#f8f8f8;transform:scaleX(1.0562);font-style:italic;font-family:'Liberation Serif',serif;-webkit-text-stroke:0.2px #f8f8f8;">fx</span>
<svg class="r" style="left:148.40px;top:143.00px;" width="6.4" height="4.2" viewBox="0 0 6.4 4.2" fill="none"><path d="M0 0.3L3.2 3.5L6.4 0.3" stroke="#bdbdbd" stroke-width="1" stroke-linecap="round" stroke-linejoin="round"/></svg>
<div class="r" style="left:160.00px;top:134.00px;width:558.50px;height:38.50px;background:#292929;border:1px solid #464646;border-radius:4px;"></div>
<span class="t" style="left:167.93px;top:138px;font-size:12.60px;line-height:17px;color:#f4f4f4;transform:scaleX(0.9674);font-family:'Liberation Mono',monospace;">=XMATCH(F2,Table1[Employee Name])</span>
<svg class="r" style="left:706.60px;top:141.00px;" width="7.6" height="4.2" viewBox="0 0 7.6 4.2" fill="none"><path d="M0.3 4L3.8 0.4L7.3 4" stroke="#e0e0e0" stroke-width="1.1"/></svg>
<div class="r" style="left:1.20px;top:177.00px;width:707.40px;height:18.00px;background:#0b0b0b;"></div>
<div class="r" style="left:26.00px;top:195.00px;width:682.60px;height:223.00px;background:#ffffff;"></div>
<div class="r" style="left:133.00px;top:195.00px;width:1.00px;height:223.00px;background:#e8e8e8;"></div>
<div class="r" style="left:195.00px;top:195.00px;width:1.00px;height:223.00px;background:#e8e8e8;"></div>
<div class="r" style="left:277.00px;top:195.00px;width:1.00px;height:223.00px;background:#e8e8e8;"></div>
<div class="r" style="left:339.00px;top:195.00px;width:1.00px;height:223.00px;background:#e8e8e8;"></div>
<div class="r" style="left:438.00px;top:195.00px;width:1.00px;height:223.00px;background:#e8e8e8;"></div>
<div class="r" style="left:567.00px;top:195.00px;width:1.00px;height:223.00px;background:#e8e8e8;"></div>
<div class="r" style="left:629.00px;top:195.00px;width:1.00px;height:223.00px;background:#e8e8e8;"></div>
<div class="r" style="left:691.00px;top:195.00px;width:1.00px;height:223.00px;background:#e8e8e8;"></div>
<div class="r" style="left:26.00px;top:212.00px;width:682.60px;height:1.00px;background:#e8e8e8;"></div>
<div class="r" style="left:26.00px;top:230.00px;width:682.60px;height:1.00px;background:#e8e8e8;"></div>
<div class="r" style="left:26.00px;top:248.00px;width:682.60px;height:1.00px;background:#e8e8e8;"></div>
<div class="r" style="left:26.00px;top:266.00px;width:682.60px;height:1.00px;background:#e8e8e8;"></div>
<div class="r" style="left:26.00px;top:284.00px;width:682.60px;height:1.00px;background:#e8e8e8;"></div>
<div class="r" style="left:26.00px;top:301.00px;width:682.60px;height:1.00px;background:#e8e8e8;"></div>
<div class="r" style="left:26.00px;top:319.00px;width:682.60px;height:1.00px;background:#e8e8e8;"></div>
<div class="r" style="left:26.00px;top:337.00px;width:682.60px;height:1.00px;background:#e8e8e8;"></div>
<div class="r" style="left:26.00px;top:355.00px;width:682.60px;height:1.00px;background:#e8e8e8;"></div>
<div class="r" style="left:26.00px;top:373.00px;width:682.60px;height:1.00px;background:#e8e8e8;"></div>
<div class="r" style="left:26.00px;top:391.00px;width:682.60px;height:1.00px;background:#e8e8e8;"></div>
<div class="r" style="left:26.00px;top:409.00px;width:682.60px;height:1.00px;background:#e8e8e8;"></div>
<div class="r" style="left:133.00px;top:178.00px;width:1.00px;height:17.00px;background:#2d2d2d;"></div>
<span class="t" style="left:76.18px;top:179px;font-size:11.80px;line-height:16px;color:#f4f4f4;transform:scaleX(0.9700);-webkit-text-stroke:0.2px #f4f4f4;-webkit-text-stroke:0.08px #f4f4f4;">A</span>
<div class="r" style="left:195.00px;top:178.00px;width:1.00px;height:17.00px;background:#2d2d2d;"></div>
<span class="t" style="left:161.03px;top:179px;font-size:11.80px;line-height:16px;color:#f4f4f4;transform:scaleX(0.9700);-webkit-text-stroke:0.2px #f4f4f4;-webkit-text-stroke:0.08px #f4f4f4;">B</span>
<div class="r" style="left:277.00px;top:178.00px;width:1.00px;height:17.00px;background:#2d2d2d;"></div>
<span class="t" style="left:232.82px;top:179px;font-size:11.80px;line-height:16px;color:#f4f4f4;transform:scaleX(0.9700);-webkit-text-stroke:0.2px #f4f4f4;-webkit-text-stroke:0.08px #f4f4f4;">C</span>
<div class="r" style="left:339.00px;top:178.00px;width:1.00px;height:17.00px;background:#2d2d2d;"></div>
<span class="t" style="left:304.67px;top:179px;font-size:11.80px;line-height:16px;color:#f4f4f4;transform:scaleX(0.9700);-webkit-text-stroke:0.2px #f4f4f4;-webkit-text-stroke:0.08px #f4f4f4;">D</span>
<div class="r" style="left:438.00px;top:178.00px;width:1.00px;height:17.00px;background:#2d2d2d;"></div>
<span class="t" style="left:385.47px;top:179px;font-size:11.80px;line-height:16px;color:#f4f4f4;transform:scaleX(0.9700);-webkit-text-stroke:0.2px #f4f4f4;-webkit-text-stroke:0.08px #f4f4f4;">E</span>
<div class="r" style="left:439.00px;top:177.00px;width:129.00px;height:16.80px;background:#6b6b6b;"></div>
<div class="r" style="left:439.00px;top:193.70px;width:129.00px;height:1.30px;background:#2a7f4e;"></div>
<div class="r" style="left:567.00px;top:178.00px;width:1.00px;height:17.00px;background:#2d2d2d;"></div>
<span class="t" style="left:499.77px;top:179px;font-size:11.80px;line-height:16px;color:#f4f4f4;transform:scaleX(0.9700);-webkit-text-stroke:0.2px #f4f4f4;-webkit-text-stroke:0.08px #f4f4f4;">F</span>
<div class="r" style="left:629.00px;top:178.00px;width:1.00px;height:17.00px;background:#2d2d2d;"></div>
<span class="t" style="left:594.70px;top:179px;font-size:11.80px;line-height:16px;color:#f4f4f4;transform:scaleX(0.9700);-webkit-text-stroke:0.2px #f4f4f4;-webkit-text-stroke:0.08px #f4f4f4;">G</span>
<div class="r" style="left:691.00px;top:178.00px;width:1.00px;height:17.00px;background:#2d2d2d;"></div>
<span class="t" style="left:656.88px;top:179px;font-size:11.80px;line-height:16px;color:#f4f4f4;transform:scaleX(0.9700);-webkit-text-stroke:0.2px #f4f4f4;-webkit-text-stroke:0.08px #f4f4f4;">H</span>
<div class="r" style="left:25.00px;top:178.00px;width:1.00px;height:17.00px;background:#2d2d2d;"></div>
<div class="r" style="left:1.20px;top:194.00px;width:24.80px;height:1.00px;background:#2d2d2d;"></div>
<svg class="r" style="left:10.00px;top:179.60px;" width="14" height="13.8" viewBox="0 0 14 13.8" fill="none"><path d="M14 0V13.8H0z" fill="#6b6b6b"/></svg>
<div class="r" style="left:1.20px;top:212.00px;width:23.80px;height:1.00px;background:#2d2d2d;"></div>
<span class="t" style="left:10.13px;top:197px;font-size:11.80px;line-height:16px;color:#f4f4f4;transform:scaleX(0.9500);-webkit-text-stroke:0.2px #f4f4f4;">1</span>
<div class="r" style="left:1.20px;top:230.00px;width:23.80px;height:1.00px;background:#2d2d2d;"></div>
<span class="t" style="left:10.28px;top:215px;font-size:11.80px;line-height:16px;color:#f4f4f4;transform:scaleX(0.9500);-webkit-text-stroke:0.2px #f4f4f4;">2</span>
<div class="r" style="left:1.20px;top:230.60px;width:23.80px;height:18.00px;background:#6b6b6b;"></div>
<div class="r" style="left:24.90px;top:230.40px;width:1.00px;height:18.60px;background:#357a52;"></div>
<div class="r" style="left:1.20px;top:248.00px;width:23.80px;height:1.00px;background:#2d2d2d;"></div>
<span class="t" style="left:10.31px;top:233px;font-size:11.80px;line-height:16px;color:#f4f4f4;transform:scaleX(0.9500);-webkit-text-stroke:0.2px #f4f4f4;">3</span>
<div class="r" style="left:1.20px;top:266.00px;width:23.80px;height:1.00px;background:#2d2d2d;"></div>
<span class="t" style="left:10.31px;top:251px;font-size:11.80px;line-height:16px;color:#f4f4f4;transform:scaleX(0.9500);-webkit-text-stroke:0.2px #f4f4f4;">4</span>
<div class="r" style="left:1.20px;top:284.00px;width:23.80px;height:1.00px;background:#2d2d2d;"></div>
<span class="t" style="left:10.31px;top:269px;font-size:11.80px;line-height:16px;color:#f4f4f4;transform:scaleX(0.9500);-webkit-text-stroke:0.2px #f4f4f4;">5</span>
<div class="r" style="left:1.20px;top:301.00px;width:23.80px;height:1.00px;background:#2d2d2d;"></div>
<span class="t" style="left:10.25px;top:287px;font-size:11.80px;line-height:16px;color:#f4f4f4;transform:scaleX(0.9500);-webkit-text-stroke:0.2px #f4f4f4;">6</span>
<div class="r" style="left:1.20px;top:319.00px;width:23.80px;height:1.00px;background:#2d2d2d;"></div>
<span class="t" style="left:10.28px;top:304px;font-size:11.80px;line-height:16px;color:#f4f4f4;transform:scaleX(0.9500);-webkit-text-stroke:0.2px #f4f4f4;">7</span>
<div class="r" style="left:1.20px;top:337.00px;width:23.80px;height:1.00px;background:#2d2d2d;"></div>
<span class="t" style="left:10.28px;top:322px;font-size:11.80px;line-height:16px;color:#f4f4f4;transform:scaleX(0.9500);-webkit-text-stroke:0.2px #f4f4f4;">8</span>
<div class="r" style="left:1.20px;top:355.00px;width:23.80px;height:1.00px;background:#2d2d2d;"></div>
<span class="t" style="left:10.28px;top:340px;font-size:11.80px;line-height:16px;color:#f4f4f4;transform:scaleX(0.9500);-webkit-text-stroke:0.2px #f4f4f4;">9</span>
<div class="r" style="left:1.20px;top:373.00px;width:23.80px;height:1.00px;background:#2d2d2d;"></div>
<span class="t" style="left:6.96px;top:358px;font-size:11.80px;line-height:16px;color:#f4f4f4;transform:scaleX(0.9500);-webkit-text-stroke:0.2px #f4f4f4;">10</span>
<div class="r" style="left:1.20px;top:391.00px;width:23.80px;height:1.00px;background:#2d2d2d;"></div>
<span class="t" style="left:7.43px;top:376px;font-size:11.80px;line-height:16px;color:#f4f4f4;transform:scaleX(0.9500);-webkit-text-stroke:0.2px #f4f4f4;">11</span>
<div class="r" style="left:1.20px;top:409.00px;width:23.80px;height:1.00px;background:#2d2d2d;"></div>
<span class="t" style="left:7.02px;top:394px;font-size:11.80px;line-height:16px;color:#f4f4f4;transform:scaleX(0.9500);-webkit-text-stroke:0.2px #f4f4f4;">12</span>
<span class="t" style="left:6.99px;top:412px;font-size:11.80px;line-height:16px;color:#f4f4f4;transform:scaleX(0.9500);-webkit-text-stroke:0.2px #f4f4f4;clip-path:inset(0 0 8.5px 0);">13</span>
<div class="r" style="left:26.00px;top:195.00px;width:252.00px;height:18.00px;background:#8ce494;"></div>
<div class="r" style="left:26.00px;top:213.00px;width:252.00px;height:107.00px;background:#c45616;"></div>
<div class="r" style="left:26.00px;top:230.00px;width:252.00px;height:1.00px;background:#5c2c0c;"></div>
<div class="r" style="left:26.00px;top:248.00px;width:252.00px;height:1.00px;background:#5c2c0c;"></div>
<div class="r" style="left:26.00px;top:266.00px;width:252.00px;height:1.00px;background:#5c2c0c;"></div>
<div class="r" style="left:26.00px;top:284.00px;width:252.00px;height:1.00px;background:#5c2c0c;"></div>
<div class="r" style="left:26.00px;top:301.00px;width:252.00px;height:1.00px;background:#5c2c0c;"></div>
<div class="r" style="left:26.00px;top:319.00px;width:252.00px;height:1.00px;background:#5c2c0c;"></div>
<div class="r" style="left:26.00px;top:212.00px;width:252.00px;height:1.00px;background:#5d7a3c;"></div>
<div class="r" style="left:133.00px;top:195.00px;width:1.00px;height:125.00px;background:#3a1d08;"></div>
<div class="r" style="left:195.00px;top:195.00px;width:1.00px;height:125.00px;background:#3a1d08;"></div>
<div class="r" style="left:277.00px;top:195.00px;width:1.00px;height:125.00px;background:#3a1d08;"></div>
<span class="t" style="left:26.85px;top:197px;font-size:11.80px;line-height:16px;color:#0c0c0c;transform:scaleX(1.0053);font-weight:700;">Employee Name</span>
<div class="r" style="left:121.00px;top:200.80px;width:11.80px;height:11.20px;background:#ffffff;border:1px solid #c4c4c4;"></div>
<svg class="r" style="left:124.60px;top:205.60px;" width="4.6" height="2.6" viewBox="0 0 4.6 2.6" fill="none"><path d="M0 0h4.6L2.3 2.6z" fill="#3c3c3c"/></svg>
<span class="t" style="left:135.49px;top:197px;font-size:11.80px;line-height:16px;color:#0c0c0c;transform:scaleX(0.9925);font-weight:700;">Salary</span>
<div class="r" style="left:183.40px;top:200.80px;width:11.80px;height:11.20px;background:#ffffff;border:1px solid #c4c4c4;"></div>
<svg class="r" style="left:187.00px;top:205.60px;" width="4.6" height="2.6" viewBox="0 0 4.6 2.6" fill="none"><path d="M0 0h4.6L2.3 2.6z" fill="#3c3c3c"/></svg>
<span class="t" style="left:197.23px;top:197px;font-size:11.80px;line-height:16px;color:#0c0c0c;transform:scaleX(1.0267);font-weight:700;">Incentive</span>
<div class="r" style="left:265.20px;top:200.80px;width:11.80px;height:11.20px;background:#ffffff;border:1px solid #c4c4c4;"></div>
<svg class="r" style="left:268.80px;top:205.60px;" width="4.6" height="2.6" viewBox="0 0 4.6 2.6" fill="none"><path d="M0 0h4.6L2.3 2.6z" fill="#3c3c3c"/></svg>
<span class="t" style="left:27.00px;top:215px;font-size:12.00px;line-height:16px;color:#1c1006;transform:scaleX(1.0708);">Daniel</span>
<span class="t" style="left:155.82px;top:215px;font-size:12.00px;line-height:16px;color:#1c1006;transform:scaleX(1.0312);">25,000</span>
<span class="t" style="left:248.14px;top:215px;font-size:12.00px;line-height:16px;color:#1c1006;transform:scaleX(1.0460);">3000</span>
<span class="t" style="left:27.81px;top:233px;font-size:12.00px;line-height:16px;color:#1c1006;transform:scaleX(0.9973);">Jennifer</span>
<span class="t" style="left:155.49px;top:233px;font-size:12.00px;line-height:16px;color:#1c1006;transform:scaleX(1.0403);">10,000</span>
<span class="t" style="left:248.01px;top:233px;font-size:12.00px;line-height:16px;color:#1c1006;transform:scaleX(1.0511);">2000</span>
<span class="t" style="left:27.02px;top:251px;font-size:12.00px;line-height:16px;color:#1c1006;transform:scaleX(1.0464);">Delfy</span>
<span class="t" style="left:158.88px;top:251px;font-size:12.00px;line-height:16px;color:#1c1006;transform:scaleX(1.0420);">56000</span>
<span class="t" style="left:248.01px;top:251px;font-size:12.00px;line-height:16px;color:#1c1006;transform:scaleX(1.0511);">2500</span>
<span class="t" style="left:27.03px;top:269px;font-size:12.00px;line-height:16px;color:#1c1006;transform:scaleX(1.0333);">Dennis</span>
<span class="t" style="left:158.94px;top:269px;font-size:12.00px;line-height:16px;color:#1c1006;transform:scaleX(1.0400);">34000</span>
<span class="t" style="left:247.67px;top:269px;font-size:12.00px;line-height:16px;color:#1c1006;transform:scaleX(1.0640);">1000</span>
<span class="t" style="left:27.43px;top:287px;font-size:12.00px;line-height:16px;color:#1c1006;transform:scaleX(1.0051);">George</span>
<span class="t" style="left:158.94px;top:287px;font-size:12.00px;line-height:16px;color:#1c1006;transform:scaleX(1.0400);">32000</span>
<span class="t" style="left:248.01px;top:287px;font-size:12.00px;line-height:16px;color:#1c1006;transform:scaleX(1.0511);">2500</span>
<span class="t" style="left:27.05px;top:304px;font-size:12.00px;line-height:16px;color:#1c1006;transform:scaleX(1.0182);">Raayn</span>
<span class="t" style="left:159.14px;top:304px;font-size:12.00px;line-height:16px;color:#1c1006;transform:scaleX(1.0340);">45000</span>
<span class="t" style="left:247.67px;top:304px;font-size:12.00px;line-height:16px;color:#1c1006;transform:scaleX(1.0640);">1000</span>
<div class="r" style="left:340.00px;top:213.00px;width:228.00px;height:18.00px;background:#da70d2;"></div>
<div class="r" style="left:340.00px;top:231.00px;width:228.00px;height:18.00px;background:#58f050;"></div>
<div class="r" style="left:339.00px;top:212.00px;width:229.00px;height:1.00px;background:rgba(25,35,25,0.62);"></div>
<div class="r" style="left:339.00px;top:230.00px;width:229.00px;height:1.00px;background:rgba(25,35,25,0.62);"></div>
<div class="r" style="left:339.00px;top:248.00px;width:229.00px;height:1.00px;background:rgba(25,35,25,0.62);"></div>
<div class="r" style="left:339.00px;top:212.00px;width:1.00px;height:37.00px;background:rgba(25,35,25,0.62);"></div>
<div class="r" style="left:438.00px;top:212.00px;width:1.00px;height:37.00px;background:rgba(25,35,25,0.62);"></div>
<div class="r" style="left:567.00px;top:212.00px;width:1.00px;height:37.00px;background:rgba(25,35,25,0.62);"></div>
<span class="t" style="left:341.60px;top:215px;font-size:12.00px;line-height:16px;color:#0c0c0c;transform:scaleX(0.9858);font-weight:700;">Employee Name</span>
<span class="t" style="left:440.95px;top:215px;font-size:12.00px;line-height:16px;color:#0c0c0c;transform:scaleX(1.0415);font-weight:700;">Daniel</span>
<span class="t" style="left:341.44px;top:233px;font-size:12.00px;line-height:16px;color:#0c0c0c;transform:scaleX(1.0293);">Position</span>
<div class="r" style="left:438.00px;top:230.00px;width:130.00px;height:19.00px;background:transparent;border:1.5px solid #2a6e46;"></div>
<div class="r" style="left:565.60px;top:246.50px;width:4.00px;height:4.00px;background:#1d6b3a;border:0.7px solid #fff;"></div>
<span class="t" style="left:559.69px;top:235px;font-size:10.60px;line-height:14px;color:#0a0a0a;transform:scaleX(1.1200);font-weight:700;font-family:'Liberation Serif',serif;">1</span>
<div class="r" style="left:534.60px;top:227.40px;width:46.70px;height:26.20px;background:transparent;border:2.4px solid #e8202a;"></div>
<div class="r" style="left:708.60px;top:177.00px;width:11.40px;height:244.00px;background:#0b0b0b;"></div>
<div class="r" style="left:710.50px;top:178.00px;width:9.50px;height:242.00px;background:#1a1a1a;border-radius:5px 0 0 5px;"></div>
<svg class="r" style="left:712.60px;top:182.00px;" width="6.4" height="4.6" viewBox="0 0 6.4 4.6" fill="none"><path d="M0 4.6L3.2 0l3.2 4.6z" fill="#9c9c9c"/></svg>
<div class="r" style="left:712.60px;top:190.60px;width:6.40px;height:123.40px;background:#9c9c9c;border-radius:3.2px;"></div>
<svg class="r" style="left:712.60px;top:411.00px;" width="6.4" height="4.6" viewBox="0 0 6.4 4.6" fill="none"><path d="M0 0h6.4L3.2 4.6z" fill="#9c9c9c"/></svg>
<div class="r" style="left:1.20px;top:418.00px;width:718.80px;height:23.00px;background:#0b0b0b;"></div>
<svg class="r" style="left:18.00px;top:425.00px;" width="4.6" height="8" viewBox="0 0 4.6 8" fill="none"><path d="M4.2 0.4L0.5 4l3.7 3.6" stroke="#9a9a9a" stroke-width="1"/></svg>
<svg class="r" style="left:41.40px;top:425.00px;" width="4.6" height="8" viewBox="0 0 4.6 8" fill="none"><path d="M0.4 0.4L4.1 4L0.4 7.6" stroke="#9a9a9a" stroke-width="1"/></svg>
<div class="r" style="left:81.50px;top:418.00px;width:41.50px;height:20.60px;background:#ffffff;border-radius:0 0 4px 4px;"></div>
<span class="t" style="left:86.56px;top:421px;font-size:11.40px;line-height:15px;color:#1a1a1a;transform:scaleX(0.8700);letter-spacing:-0.208px;-webkit-text-stroke:0.25px #1a1a1a;">Sheet1</span>
<div class="r" style="left:87.00px;top:434.70px;width:29.80px;height:1.70px;background:#1e8e4e;border-radius:1px;"></div>
<div class="r" style="left:126.00px;top:424.00px;width:1.00px;height:11.40px;background:#555;"></div>
<div class="r" style="left:160.40px;top:425.00px;width:1.10px;height:8.40px;background:#e0e0e0;"></div>
<div class="r" style="left:156.80px;top:428.70px;width:8.40px;height:1.10px;background:#e0e0e0;"></div>
<div class="r" style="left:436.40px;top:425.60px;width:1.70px;height:1.60px;background:#ececec;border-radius:1px;"></div>
<div class="r" style="left:436.40px;top:428.60px;width:1.70px;height:1.60px;background:#ececec;border-radius:1px;"></div>
<div class="r" style="left:436.40px;top:431.60px;width:1.70px;height:1.60px;background:#ececec;border-radius:1px;"></div>
<div class="r" style="left:449.00px;top:421.60px;width:261.50px;height:16.00px;background:#1a1a1a;border-radius:8px;"></div>
<svg class="r" style="left:452.60px;top:426.00px;" width="4.8" height="7" viewBox="0 0 4.8 7" fill="none"><path d="M4.8 0V7L0 3.5z" fill="#9c9c9c"/></svg>
<div class="r" style="left:461.60px;top:426.40px;width:219.60px;height:6.40px;background:#9c9c9c;border-radius:3.2px;"></div>
<svg class="r" style="left:701.00px;top:426.00px;" width="4.8" height="7" viewBox="0 0 4.8 7" fill="none"><path d="M0 0V7L4.8 3.5z" fill="#9c9c9c"/></svg>
<div class="r" style="left:1.20px;top:441.00px;width:718.80px;height:16.30px;background:#171717;border-bottom-left-radius:5px;"></div>
<span class="t" style="left:8.95px;top:443px;font-size:9.40px;line-height:13px;color:#e8e8e8;transform:scaleX(0.8700);letter-spacing:-0.674px;-webkit-text-stroke:0.2px #e8e8e8;">Ready</span>
<svg class="r" style="left:43.00px;top:445.20px;" width="11.4" height="9.6" viewBox="0 0 11.4 9.6" fill="none"><rect x="0.5" y="0.5" width="10" height="8" rx="0.8" stroke="#d8d8d8" stroke-width="0.9"/><path d="M0.5 2.8h10 M2.8 2.8v5.6" stroke="#d8d8d8" stroke-width="0.8"/><circle cx="7.4" cy="6.2" r="2.3" fill="#171717" stroke="#d8d8d8" stroke-width="0.9"/><circle cx="7.4" cy="6.2" r="0.8" fill="#d8d8d8"/></svg>
<svg class="r" style="left:65.60px;top:444.40px;" width="11" height="11" viewBox="0 0 11 11" fill="none"><circle cx="5" cy="1.6" r="1.2" stroke="#e0e0e0" stroke-width="0.8"/><path d="M1 3.6c2.4 1 5.6 1 8 0 M5 4.2v3 M5 7.2l-2.6 3.4 M5 7.2l1.4 1.6" stroke="#e0e0e0" stroke-width="0.9"/><path d="M6.6 7.4l3.4 3.2 M10 7.4l-3.4 3.2" stroke="#e0e0e0" stroke-width="0.9"/></svg>
<span class="t" style="left:79.38px;top:444px;font-size:9.20px;line-height:12px;color:#ececec;transform:scaleX(0.8700);letter-spacing:-0.204px;font-weight:700;">Accessibility: Investigate</span>
<div class="r" style="left:500.00px;top:441.00px;width:28.60px;height:16.30px;background:#272727;"></div>
<svg class="r" style="left:509.40px;top:444.40px;" width="10" height="10" viewBox="0 0 10 10" fill="none"><rect x="0.5" y="0.5" width="9" height="9" stroke="#ececec" stroke-width="0.9"/><path d="M3.5 0.5v9 M6.5 0.5v9 M0.5 3.5h9 M0.5 6.5h9" stroke="#ececec" stroke-width="0.8"/></svg>
<svg class="r" style="left:538.00px;top:444.40px;" width="11" height="10" viewBox="0 0 11 10" fill="none"><rect x="0.5" y="0.5" width="10" height="9" stroke="#ececec" stroke-width="0.9"/><rect x="3" y="2.6" width="5" height="4.8" stroke="#ececec" stroke-width="0.8"/><path d="M0.5 5h2.5 M8 5h2.5" stroke="#ececec" stroke-width="0.7"/></svg>
<svg class="r" style="left:567.00px;top:444.40px;" width="11" height="10" viewBox="0 0 11 10" fill="none"><path d="M0.5 0.5h10v9H0.5z M3.4 0.5v4.6h4.4V0.5" stroke="#ececec" stroke-width="0.9"/></svg>
<div class="r" style="left:591.00px;top:449.10px;width:5.40px;height:1.00px;background:#d0d0d0;"></div>
<div class="r" style="left:600.00px;top:449.20px;width:72.00px;height:0.90px;background:#8c8c8c;"></div>
<div class="r" style="left:634.60px;top:445.00px;width:3.40px;height:9.00px;background:#b4b4b4;border-radius:1px;"></div>
<div class="r" style="left:675.80px;top:449.10px;width:5.80px;height:1.00px;background:#d0d0d0;"></div>
<div class="r" style="left:678.20px;top:446.70px;width:1.00px;height:5.80px;background:#d0d0d0;"></div>
<span class="t" style="left:690.40px;top:444px;font-size:9.20px;line-height:12px;color:#e0e0e0;transform:scaleX(0.8700);letter-spacing:-0.067px;-webkit-text-stroke:0.2px #e0e0e0;">100%</span>
</div></body></html>
